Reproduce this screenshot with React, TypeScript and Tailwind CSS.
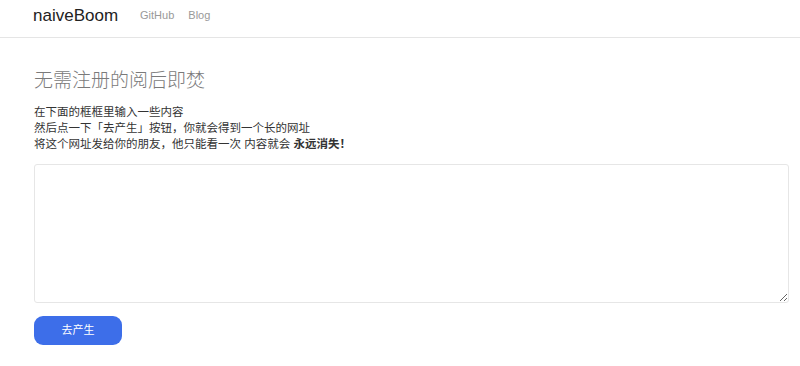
export default function App() {
  const font = { fontFamily: '"Liberation Sans", "Noto Sans CJK SC", sans-serif' };
  return (
    <div className="min-h-[366px] w-[800px] bg-white text-[#333]" style={font}>
      <nav className="flex h-[38px] items-center border-b border-[#e5e5e5] pb-[7px] pl-[33px]">
        <span className="text-[17px] leading-none text-[#222]">naiveBoom</span>
        <span className="ml-[22px] text-[11px] text-[#999]">GitHub</span>
        <span className="ml-[14px] text-[11px] text-[#999]">Blog</span>
      </nav>
      <main className="px-[34px] pt-[30px]">
        <h1 className="text-[19px] font-light leading-[26px] text-[#7a7a7a]">无需注册的阅后即焚</h1>
        <div className="mt-[10px] text-[11.5px] leading-[16px] text-[#333]">
          <p>在下面的框框里输入一些内容</p>
          <p>然后点一下「去产生」按钮，你就会得到一个长的网址</p>
          <p>
            将这个网址发给你的朋友，他只能看一次 内容就会 <b className="font-bold">永远消失！</b>
          </p>
        </div>
        <textarea className="mt-[12px] block h-[139px] w-[755px] rounded-[3px] border border-[#e6e6e6] bg-white outline-none" />
        <button className="mt-[13px] flex h-[29px] w-[88px] items-center justify-center rounded-[9px] bg-[#3d6ee9] text-[11px] text-white">
          去产生
        </button>
      </main>
    </div>
  );
}
